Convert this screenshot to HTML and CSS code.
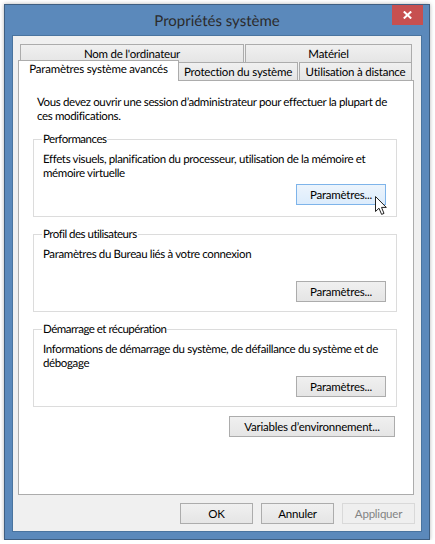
FILE: index.html
```html
<!DOCTYPE html>
<html lang="fr">
<head>
    <meta charset="UTF-8">
    <meta name="viewport" content="width=device-width, initial-scale=1.0">
    <title>Propriétés système</title>
    <link rel="stylesheet" href="styles.css">
</head>
<body>
    <div class="window">
        <div class="titlebar">
            <span class="title">Propriétés système</span>
            <button class="close" aria-label="Fermer">
                <svg width="9" height="8" viewBox="0 0 9 8"><path d="M0.8 0.5 L8.2 7.5 M8.2 0.5 L0.8 7.5" stroke="#fff" stroke-width="2" fill="none"/></svg>
            </button>
        </div>
        <div class="client">
            <div class="tabs">
                <div class="tab-row tab-row-back">
                    <div class="tab tab-computer">Nom de l'ordinateur</div>
                    <div class="tab tab-hardware">Matériel</div>
                </div>
                <div class="tab-row tab-row-front">
                    <div class="tab tab-active">Paramètres système avancés</div>
                    <div class="tab tab-protect">Protection du système</div>
                    <div class="tab tab-remote">Utilisation à distance</div>
                </div>
            </div>
            <div class="panel">
                <p class="intro">Vous devez ouvrir une session d’administrateur pour effectuer la plupart de<br>ces modifications.</p>

                <fieldset class="group">
                    <legend>Performances</legend>
                    <p>Effets visuels, planification du processeur, utilisation de la mémoire et<br>mémoire virtuelle</p>
                    <div class="group-actions">
                        <button class="btn btn-hover">Paramètres...</button>
                        <svg class="cursor" width="14" height="21" viewBox="0 0 14 21">
                            <path d="M1.5 1.5 V16.5 L5 13.2 L7.6 19.4 L10 18.4 L7.5 12.4 L12.3 12.4 Z" fill="#fff" stroke="#222" stroke-width="1"/>
                        </svg>
                    </div>
                </fieldset>

                <fieldset class="group">
                    <legend>Profil des utilisateurs</legend>
                    <p>Paramètres du Bureau liés à votre connexion</p>
                    <div class="group-actions">
                        <button class="btn">Paramètres...</button>
                    </div>
                </fieldset>

                <fieldset class="group">
                    <legend>Démarrage et récupération</legend>
                    <p>Informations de démarrage du système, de défaillance du système et de<br>débogage</p>
                    <div class="group-actions">
                        <button class="btn">Paramètres...</button>
                    </div>
                </fieldset>

                <div class="env-row">
                    <button class="btn btn-env">Variables d’environnement...</button>
                </div>
            </div>
            <div class="footer">
                <button class="btn btn-dialog">OK</button>
                <button class="btn btn-dialog">Annuler</button>
                <button class="btn btn-dialog btn-disabled">Appliquer</button>
            </div>
        </div>
    </div>
</body>
</html>
```

FILE: styles.css
```css
* {
    box-sizing: border-box;
}

body {
    margin: 0;
    background: #fff;
    font-family: Lato, Roboto, "Liberation Sans", sans-serif;
    font-size: 11.5px;
    letter-spacing: -0.22px;
    color: #000;
    text-rendering: geometricPrecision;
}

.window {
    width: 426px;
    height: 536px;
    margin: 4px 0 0 4px;
    padding: 0 7px 7px;
    display: flex;
    flex-direction: column;
    background: #5b89bb;
    border: 1px solid #3f5f82;
    box-shadow: 0 0 4px rgba(0, 0, 0, 0.3);
}

.titlebar {
    height: 30px;
    flex: none;
    display: flex;
    justify-content: center;
    align-items: center;
    position: relative;
}

.title {
    font-size: 15px;
    letter-spacing: 0;
    color: #2b2b2b;
    padding-top: 1px;
}

.close {
    position: absolute;
    top: 0;
    right: -1px;
    width: 31px;
    height: 20px;
    padding: 0;
    border: none;
    background: #c75050;
    display: flex;
    align-items: center;
    justify-content: center;
}

.client {
    flex: 1;
    background: #f0f0f0;
    padding: 8px 7px 0 5px;
    display: flex;
    flex-direction: column;
    border: 1px solid #4a749f;
}

.tabs {
    flex: none;
    height: 36px;
}

.tab-row {
    display: flex;
}

.tab {
    height: 18px;
    line-height: 20px;
    text-align: center;
    white-space: nowrap;
    background: linear-gradient(#f0f0f0, #e5e5e5);
    border: 1px solid #acacac;
    border-bottom: none;
}

.tab-row-back {
    padding-left: 2px;
}

.tab-computer {
    width: 224px;
}

.tab-hardware {
    width: 167px;
    margin-left: 1px;
}

.tab-active {
    width: 161px;
    height: 21px;
    margin-top: -2px;
    margin-bottom: -1px;
    line-height: 18px;
    background: #fff;
    position: relative;
    z-index: 1;
}

.tab-protect {
    width: 119px;
    border-left: none;
}

.tab-remote {
    width: 113px;
    margin-left: 1px;
}

.panel {
    flex: 1;
    background: #fff;
    border: 1px solid #acacac;
    padding: 15px 16px 0 18px;
    display: flex;
    flex-direction: column;
}

p {
    margin: 0;
    line-height: 14px;
    letter-spacing: -0.36px;
    white-space: nowrap;
}

.intro {
    margin-bottom: 8px;
}

.group {
    flex: none;
    margin: 0 0 10px -4px;
    padding: 0 10px 0 9px;
    height: 85px;
    border: 1px solid #dcdcdc;
    min-width: 0;
}

.group legend {
    padding: 1px 1px 0;
    margin-left: -1px;
    line-height: 14px;
    letter-spacing: -0.5px;
}

.group p {
    margin-top: 6px;
    min-height: 28px;
}

.group-actions {
    position: relative;
    display: flex;
    justify-content: flex-end;
    margin-top: 5px;
}

.group:nth-of-type(1) .group-actions {
    margin-top: 3px;
}

.btn {
    width: 90px;
    height: 21px;
    padding: 0;
    font: inherit;
    letter-spacing: inherit;
    color: #000;
    background: linear-gradient(#f0f0f0, #e5e5e5);
    border: 1px solid #acacac;
}

.btn-hover {
    background: linear-gradient(#ecf4fc, #dcecfc);
    border-color: #7eb4ea;
}

.cursor {
    position: absolute;
    right: -2px;
    top: 11px;
}

.env-row {
    display: flex;
    justify-content: flex-end;
    margin-top: -1px;
    padding-right: 2px;
}

.btn-env {
    width: 166px;
}

.footer {
    flex: none;
    display: flex;
    justify-content: flex-end;
    gap: 8px;
    height: 36px;
    padding-top: 8px;
    margin-right: -1px;
}

.btn-dialog {
    width: 73px;
}

.btn-disabled {
    color: #838383;
    background: #efefef;
    border-color: #d9d9d9;
}
```
